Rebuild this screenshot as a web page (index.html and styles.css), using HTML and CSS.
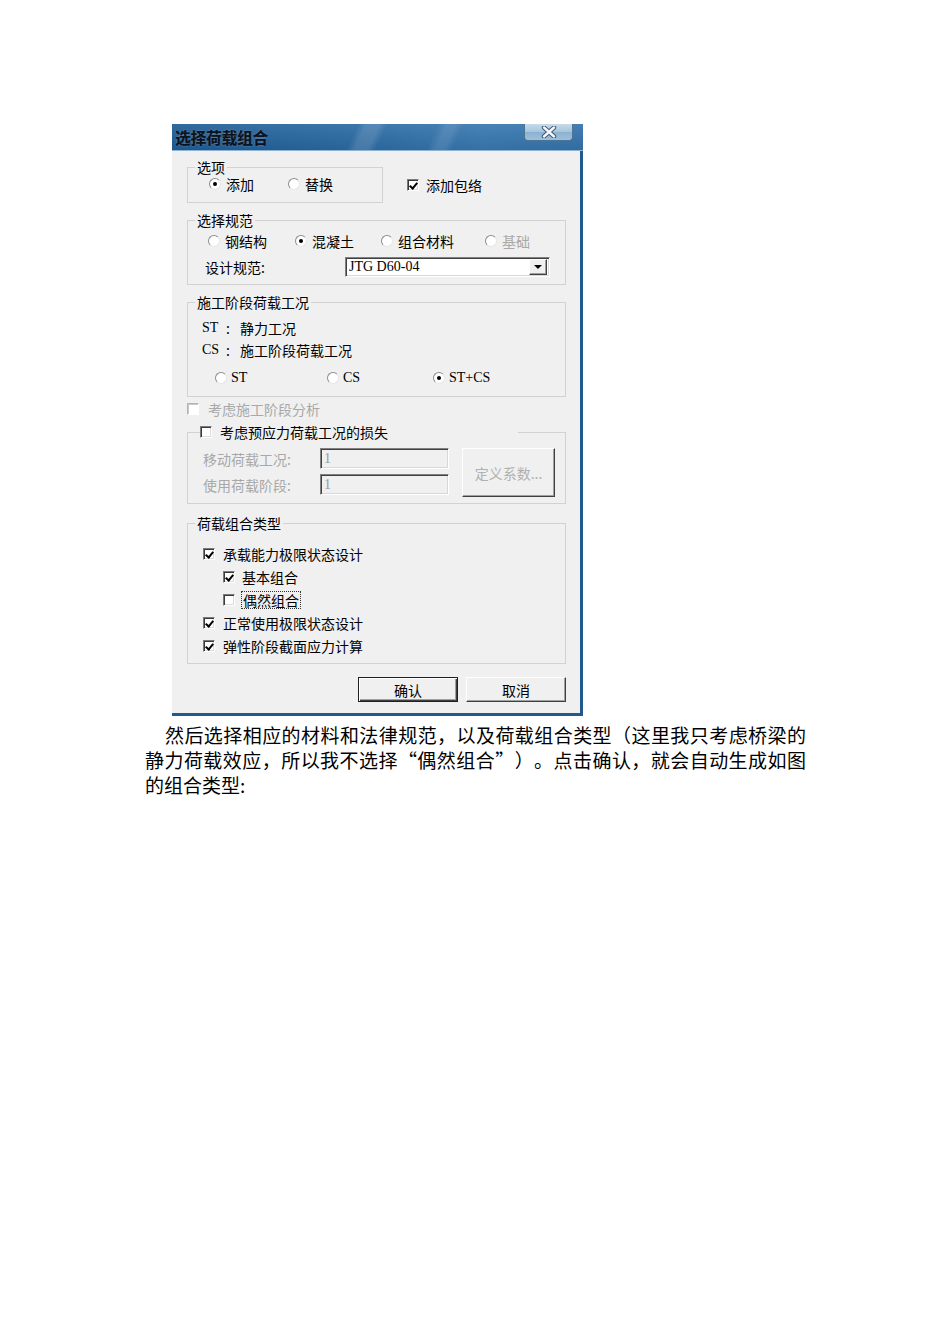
FILE: index.html
```html
<!DOCTYPE html>
<html lang="zh-CN">
<head>
<meta charset="utf-8">
<title>选择荷载组合</title>
<link rel="stylesheet" href="styles.css">
</head>
<body>
<div class="page">
  <div class="dialog">
    <div class="titlebar">
      <span class="title">选择荷载组合</span>
      <div class="close">
        <svg width="16" height="12" viewBox="0 0 16 12">
          <path d="M3 1.5 L13 10.5 M13 1.5 L3 10.5" stroke="#3b5670" stroke-width="4.4" stroke-linecap="round"/>
          <path d="M3 1.5 L13 10.5 M13 1.5 L3 10.5" stroke="#f4f7fa" stroke-width="2.4" stroke-linecap="round"/>
        </svg>
      </div>
    </div>
    <div class="body">
      <div class="row1">
        <div class="group g1">
          <span class="legend">选项</span>
          <div class="opts g1-opts">
            <div class="opt"><span class="radio on"></span><span>添加</span></div>
            <div class="opt"><span class="radio"></span><span>替换</span></div>
          </div>
        </div>
        <div class="chk env"><span class="cb on"></span><span>添加包络</span></div>
      </div>

      <div class="group g2">
        <span class="legend">选择规范</span>
        <div class="opts">
          <div class="opt w87"><span class="radio"></span><span>钢结构</span></div>
          <div class="opt w86"><span class="radio on"></span><span>混凝土</span></div>
          <div class="opt w104"><span class="radio"></span><span>组合材料</span></div>
          <div class="opt dis"><span class="radio"></span><span>基础</span></div>
        </div>
        <div class="code-row">
          <span class="code-label">设计规范:</span>
          <div class="select">
            <span class="lat">JTG D60-04</span>
            <span class="drop"><span class="tri"></span></span>
          </div>
        </div>
      </div>

      <div class="group g3">
        <span class="legend">施工阶段荷载工况</span>
        <div class="def"><span class="k lat">ST</span><span class="sep">:</span><span>静力工况</span></div>
        <div class="def def2"><span class="k lat">CS</span><span class="sep">:</span><span>施工阶段荷载工况</span></div>
        <div class="opts st-opts">
          <div class="opt w112"><span class="radio"></span><span class="lat">ST</span></div>
          <div class="opt w106"><span class="radio"></span><span class="lat">CS</span></div>
          <div class="opt"><span class="radio on"></span><span class="lat">ST+CS</span></div>
        </div>
      </div>

      <div class="chk stage dis"><span class="cb"></span><span>考虑施工阶段分析</span></div>

      <div class="group g4">
        <div class="legend chk-legend"><span class="cb"></span><span>考虑预应力荷载工况的损失</span></div>
        <div class="fields">
          <div class="field-col">
            <div class="field"><span class="field-label">移动荷载工况:</span><span class="input lat">1</span></div>
            <div class="field field2"><span class="field-label">使用荷载阶段:</span><span class="input lat">1</span></div>
          </div>
          <div class="btn dis-btn">定义系数...</div>
        </div>
      </div>

      <div class="group g5">
        <span class="legend">荷载组合类型</span>
        <div class="chk crow"><span class="cb on"></span><span>承载能力极限状态设计</span></div>
        <div class="chk crow sub"><span class="cb on"></span><span>基本组合</span></div>
        <div class="chk crow sub"><span class="cb"></span><span class="focus">偶然组合</span></div>
        <div class="chk crow"><span class="cb on"></span><span>正常使用极限状态设计</span></div>
        <div class="chk crow"><span class="cb on"></span><span>弹性阶段截面应力计算</span></div>
      </div>

      <div class="buttons">
        <div class="btn default">确认</div>
        <div class="btn">取消</div>
      </div>
    </div>
  </div>

  <p class="para">
    <span class="ln first">然后选择相应的材料和法律规范，以及荷载组合类型（这里我只考虑桥梁的</span>
    <span class="ln">静力荷载效应，所以我不选择“偶然组合”）。点击确认，就会自动生成如图</span>
    <span class="ln last">的组合类型:</span>
  </p>
</div>
</body>
</html>
```
FILE: styles.css
```css
* { box-sizing: border-box; }

body {
  margin: 0;
  background: #fff;
  font-family: "Noto Sans CJK SC", "Noto Sans", sans-serif;
  color: #000;
}

.page { padding-top: 124px; }

.dialog {
  margin-left: 172px;
  width: 411px;
}

/* ---------- title bar ---------- */
.titlebar {
  height: 27px;
  display: flex;
  align-items: center;
  justify-content: space-between;
  padding-left: 3px;
  background:
    linear-gradient(115deg, transparent 0 44%, rgba(255,255,255,.13) 46% 49%, transparent 51% 63%, rgba(255,255,255,.10) 65% 67%, transparent 69% 100%),
    linear-gradient(to bottom, rgba(255,255,255,.08), rgba(0,0,0,.06)),
    linear-gradient(to right, #1f5d95, #2b6aa3 45%, #3878b0 75%, #3473ab);
  border-bottom: 1px solid #8fb2d2;
}

.title {
  font-size: 15.5px;
  font-weight: 700;
  color: #0a1420;
  line-height: 18px;
  text-shadow: 0 0 2px rgba(255,255,255,.35), 0.4px 0 0 #0a1420;
}

.close {
  align-self: flex-start;
  width: 49px;
  height: 17px;
  margin-right: 10px;
  border: 1px solid #4f7393;
  border-top: none;
  border-radius: 0 0 4px 4px;
  background: linear-gradient(#c7dbea, #a6c4dc 50%, #8db2d1 51%, #9dbfdb);
  display: flex;
  align-items: center;
  justify-content: center;
}

/* ---------- body ---------- */
.body {
  height: 565px;
  background: #f0f0f0;
  border-right: 3px solid #1e5a8e;
  border-bottom: 3px solid #1e5a8e;
  padding: 16px 14px 0 15px;
  font-size: 14px;
  line-height: 16px;
  display: flex;
  flex-direction: column;
}

.lat { font-family: "Liberation Serif", "Noto Sans CJK SC", serif; }

.group {
  position: relative;
  border: 1px solid #d2d2d2;
}

.legend {
  position: absolute;
  top: -9px;
  left: 7px;
  padding: 0 2px;
  background: #f0f0f0;
  line-height: 16px;
  white-space: nowrap;
}

/* radios */
.opts { display: flex; align-items: center; height: 16px; }
.opt { display: flex; align-items: center; gap: 5px; white-space: nowrap; }
.radio {
  position: relative;
  width: 12px;
  height: 12px;
  border-radius: 50%;
  background: #fff;
  border: 1px solid;
  border-color: #8c8c8c #e6e6e6 #e6e6e6 #8c8c8c;
  flex: none;
}
.radio.on::after {
  content: "";
  position: absolute;
  left: 3px;
  top: 3px;
  width: 4px;
  height: 4px;
  border-radius: 50%;
  background: #000;
}
.dis { color: #a8a8a8; }

/* checkboxes */
.chk { display: flex; align-items: center; gap: 8px; height: 16px; white-space: nowrap; }
.cb {
  position: relative;
  width: 12px;
  height: 12px;
  flex: none;
  background: #fff;
  border: 1px solid;
  border-color: #7a7a7a #ffffff #ffffff #7a7a7a;
  box-shadow: inset 1px 1px #3a3a3a, inset -1px -1px #dcdcdc;
}
.cb.on::after {
  content: "";
  position: absolute;
  left: 3px;
  top: 1px;
  width: 3px;
  height: 6px;
  border: solid #000;
  border-width: 0 2px 2px 0;
  transform: rotate(40deg);
}
.dis .cb {
  border-color: #b4b4b4 #ffffff #ffffff #b4b4b4;
  box-shadow: inset 1px 1px #c8c8c8;
}

/* group 1 */
.row1 { display: flex; align-items: center; }
.g1 { width: 196px; height: 36px; padding: 8px 0 0 21px; }
.g1-opts { gap: 34px; }
.env { margin-left: 24px; gap: 7px; }

/* group 2 */
.g2 { margin-top: 17px; height: 65px; padding: 12px 0 0 20px; }
.w87 { width: 87px; }
.w86 { width: 86px; }
.w104 { width: 104px; }
.w112 { width: 112px; }
.w106 { width: 106px; }
.code-row { display: flex; align-items: center; height: 20px; margin: 8px 0 0 -3px; }
.code-label { width: 140px; }
.select {
  width: 205px;
  height: 20px;
  background: #fff;
  border: 1px solid;
  border-color: #808080 #ffffff #ffffff #808080;
  box-shadow: inset 1px 1px #404040, inset -1px -1px #d8d8d8;
  display: flex;
  align-items: center;
  justify-content: space-between;
  padding: 0 2px 0 3px;
}
.drop {
  width: 18px;
  height: 16px;
  background: #f0f0f0;
  border: 1px solid;
  border-color: #ffffff #404040 #404040 #ffffff;
  box-shadow: inset -1px -1px #a0a0a0;
  display: flex;
  align-items: center;
  justify-content: center;
}
.tri {
  width: 0;
  height: 0;
  border-left: 4px solid transparent;
  border-right: 4px solid transparent;
  border-top: 4px solid #000;
}

/* group 3 */
.g3 { margin-top: 17px; height: 95px; padding: 17px 0 0 14px; }
.def { display: flex; height: 16px; }
.def2 { margin-top: 6px; }
.k { width: 24px; }
.sep { width: 14px; }
.st-opts { margin: 12px 0 0 13px; }
.st-opts .opt { gap: 4px; }

/* disabled checkbox */
.stage { margin-top: 4px; gap: 9px; }

/* group 4 */
.g4 { margin-top: 15px; height: 72px; padding: 15px 0 0 15px; }
.chk-legend { display: flex; align-items: center; gap: 8px; left: 12px; width: 318px; padding: 0; }
.fields { display: flex; }
.field { display: flex; align-items: center; height: 21px; color: #a8a8a8; }
.field2 { margin-top: 5px; }
.field-label { width: 117px; }
.input {
  width: 129px;
  height: 21px;
  background: #f0f0f0;
  border: 1px solid;
  border-color: #808080 #ffffff #ffffff #808080;
  box-shadow: inset 1px 1px #404040, inset -1px -1px #d8d8d8;
  padding: 2px 0 0 3px;
  line-height: 16px;
  color: #9a9a9a;
}

.btn {
  width: 100px;
  height: 25px;
  background: #f0f0f0;
  border: 1px solid;
  border-color: #ffffff #404040 #404040 #ffffff;
  box-shadow: inset -1px -1px #a0a0a0;
  display: flex;
  align-items: center;
  justify-content: center;
}
.dis-btn {
  width: 93px;
  height: 49px;
  margin-left: 13px;
  color: #b0b0b0;
}

/* group 5 */
.g5 { margin-top: 19px; height: 141px; padding: 18px 0 0 15px; }
.crow { height: 23px; }
.sub { padding-left: 20px; gap: 7px; }
.focus { outline: 1px dotted #333; outline-offset: 0; padding: 0 1px; }

/* buttons */
.buttons { margin-top: 13px; display: flex; justify-content: flex-end; gap: 8px; }
.btn.default {
  border: 1px solid #202020;
  box-shadow: inset 1px 1px #ffffff, inset -1px -1px #404040, inset -2px -2px #a0a0a0;
}

/* ---------- paragraph ---------- */
.para {
  margin: 6px 0 0 145px;
  width: 661px;
  font-size: 19px;
  line-height: 25px;
  text-spacing-trim: space-all;
}
.ln { display: block; text-align: justify; text-align-last: justify; white-space: nowrap; }
.ln.first { text-indent: 20px; }
.ln.last { text-align-last: left; }
```
